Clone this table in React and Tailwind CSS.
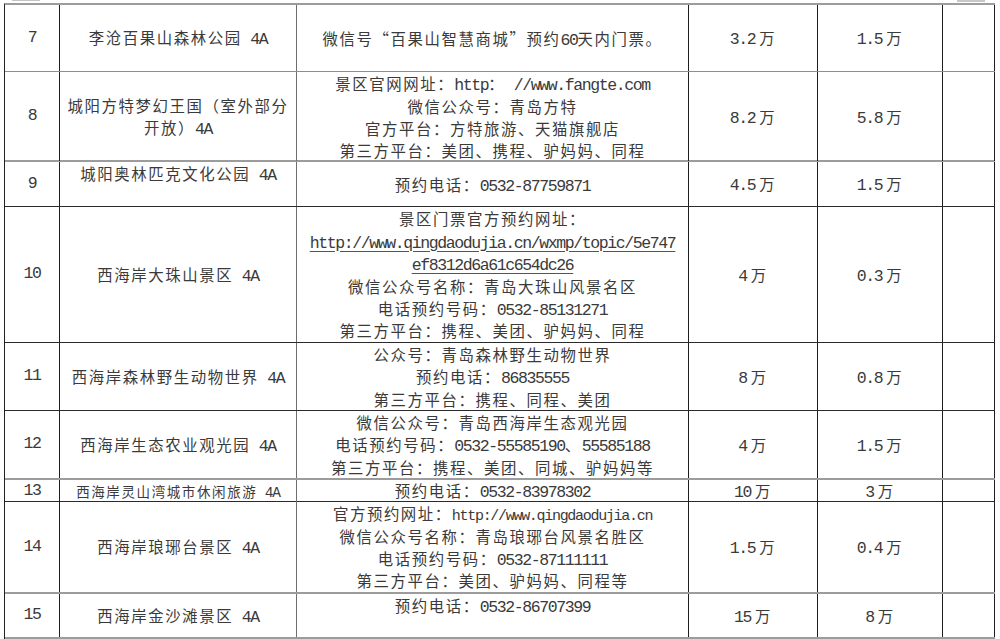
import React from "react";

const MONO = "font-['Liberation_Mono',monospace] text-[16.5px] tracking-[-1.4px] leading-none";
const MONO_SM = "font-['Liberation_Mono',monospace] text-[15px] tracking-[-1.3px] leading-none";
const MONO_XS = "font-['Liberation_Mono',monospace] text-[14.5px] tracking-[-1.2px] leading-none";

function Txt({ s, mono = MONO }) {
  const parts = s.split(/([\x20-\x7E]+)/);
  return (
    <>
      {parts.map((p, i) =>
        i % 2 === 1 ? (
          <span key={i} className={`${mono} whitespace-pre`}>
            {p}
          </span>
        ) : (
          <React.Fragment key={i}>{p}</React.Fragment>
        )
      )}
    </>
  );
}

function Num({ v }) {
  return (
    <span>
      <span className={MONO}>{v}</span>
      <span className="ml-[4px]">万</span>
    </span>
  );
}

const GRAY1 = "border-b border-b-[#8e8e8e]";
const GRAY2 = "border-b-2 border-b-[#9c9c9c]";
const DARK = "border-b border-b-[#2a2a2a]";

const rows = [
  {
    n: "7",
    h: "h-[67px]",
    b: GRAY1,
    name: ["李沧百果山森林公园 4A"],
    info: ["微信号“百果山智慧商城”预约60天内门票。"],
    a: "3.2",
    c: "1.5",
  },
  {
    n: "8",
    h: "h-[90px]",
    b: GRAY2,
    name: ["城阳方特梦幻王国（室外部分", "开放）4A"],
    info: [
      "景区官网网址：http： //www.fangte.com",
      "微信公众号：青岛方特",
      "官方平台：方特旅游、天猫旗舰店",
      "第三方平台：美团、携程、驴妈妈、同程",
    ],
    a: "8.2",
    c: "5.8",
  },
  {
    n: "9",
    h: "h-[45px]",
    b: DARK,
    name: ["城阳奥林匹克文化公园 4A"],
    nameTop: true,
    info: ["预约电话：0532-87759871"],
    a: "4.5",
    c: "1.5",
  },
  {
    n: "10",
    h: "h-[136px]",
    b: DARK,
    name: ["西海岸大珠山景区 4A"],
    info: [
      "景区门票官方预约网址：",
      { u: "http://www.qingdaodujia.cn/wxmp/topic/5e747" },
      { u: "ef8312d6a61c654dc26" },
      "微信公众号名称：青岛大珠山风景名区",
      "电话预约号码：0532-85131271",
      "第三方平台：携程、美团、驴妈妈、同程",
    ],
    a: "4",
    c: "0.3",
  },
  {
    n: "11",
    h: "h-[68px]",
    b: DARK,
    name: ["西海岸森林野生动物世界 4A"],
    info: ["公众号：青岛森林野生动物世界", "预约电话：86835555", "第三方平台：携程、同程、美团"],
    a: "8",
    c: "0.8",
  },
  {
    n: "12",
    h: "h-[69px]",
    b: GRAY2,
    name: ["西海岸生态农业观光园 4A"],
    info: [
      "微信公众号：青岛西海岸生态观光园",
      "电话预约号码：0532-55585190、55585188",
      "第三方平台：携程、美团、同城、驴妈妈等",
    ],
    a: "4",
    c: "1.5",
  },
  {
    n: "13",
    h: "h-[22px]",
    b: DARK,
    small: true,
    name: ["西海岸灵山湾城市休闲旅游 4A"],
    info: ["预约电话：0532-83978302"],
    a: "10",
    c: "3",
  },
  {
    n: "14",
    h: "h-[92px]",
    b: GRAY2,
    name: ["西海岸琅琊台景区 4A"],
    info: [
      { sm: "官方预约网址：http://www.qingdaodujia.cn" },
      "微信公众号名称：青岛琅琊台风景名胜区",
      "电话预约号码：0532-87111111",
      "第三方平台：美团、驴妈妈、同程等",
    ],
    a: "1.5",
    c: "0.4",
  },
  {
    n: "15",
    h: "h-[45px]",
    b: GRAY2,
    name: ["西海岸金沙滩景区 4A"],
    infoTop: true,
    info: ["预约电话：0532-86707399"],
    a: "15",
    c: "8",
  },
];

function InfoLine({ l }) {
  if (typeof l === "string")
    return (
      <div>
        <Txt s={l} />
      </div>
    );
  if (l.u)
    return (
      <div>
        <span className={`${MONO} underline decoration-[#555] underline-offset-[3px]`}>{l.u}</span>
      </div>
    );
  return (
    <div>
      <Txt s={l.sm} mono={MONO_SM} />
    </div>
  );
}

export default function App() {
  return (
    <div className="w-[1000px] h-[639px] bg-white overflow-hidden font-['Noto_Sans_CJK_SC',sans-serif] text-[15.4px] tracking-[1.6px] text-[#3a3a3a]">
      <div className="flex h-[3px]">
        <div className="ml-[12px] w-[28px] h-px bg-[#c4c4c4] border-r border-r-[#c4c4c4]" />
        <div className="ml-[917px] w-[28px] h-[2px] bg-[#c8c8c8]" />
      </div>
      <div className="ml-[4px] w-[991px] border-l border-l-[#222] border-t-2 border-t-[#9c9c9c]">
        {rows.map((r) => (
          <div
            key={r.n}
            className={`grid grid-cols-[55px_237px_392px_129px_125px_52px] ${r.h} ${r.b}`}
          >
            <div className="flex items-center justify-center border-r border-r-[#1e1e1e]">
              <span className={MONO}>{r.n}</span>
            </div>
            <div
              className={`flex justify-center text-center border-r border-r-[#6e6e6e] ${
                r.nameTop ? "items-start pt-[1px]" : "items-center"
              } ${r.small ? "text-[13.5px] tracking-[1.6px] leading-[20px]" : "leading-[21.5px]"}`}
            >
              <div>
                {r.name.map((l, i) => (
                  <div key={i}>
                    <Txt s={l} mono={r.small ? MONO_XS : MONO} />
                  </div>
                ))}
              </div>
            </div>
            <div
              className={`flex justify-center text-center border-r border-r-[#1e1e1e] ${
                r.infoTop ? "items-start" : "items-center"
              } ${r.small ? "leading-[20px]" : "leading-[22.3px]"}`}
            >
              <div>
                {r.info.map((l, i) => (
                  <InfoLine key={i} l={l} />
                ))}
              </div>
            </div>
            <div className="flex items-center justify-center border-r border-r-[#1e1e1e] leading-[20px]">
              <Num v={r.a} />
            </div>
            <div className="flex items-center justify-center border-r border-r-[#1e1e1e] leading-[20px]">
              <Num v={r.c} />
            </div>
            <div className="border-r border-r-[#1e1e1e]" />
          </div>
        ))}
      </div>
    </div>
  );
}
